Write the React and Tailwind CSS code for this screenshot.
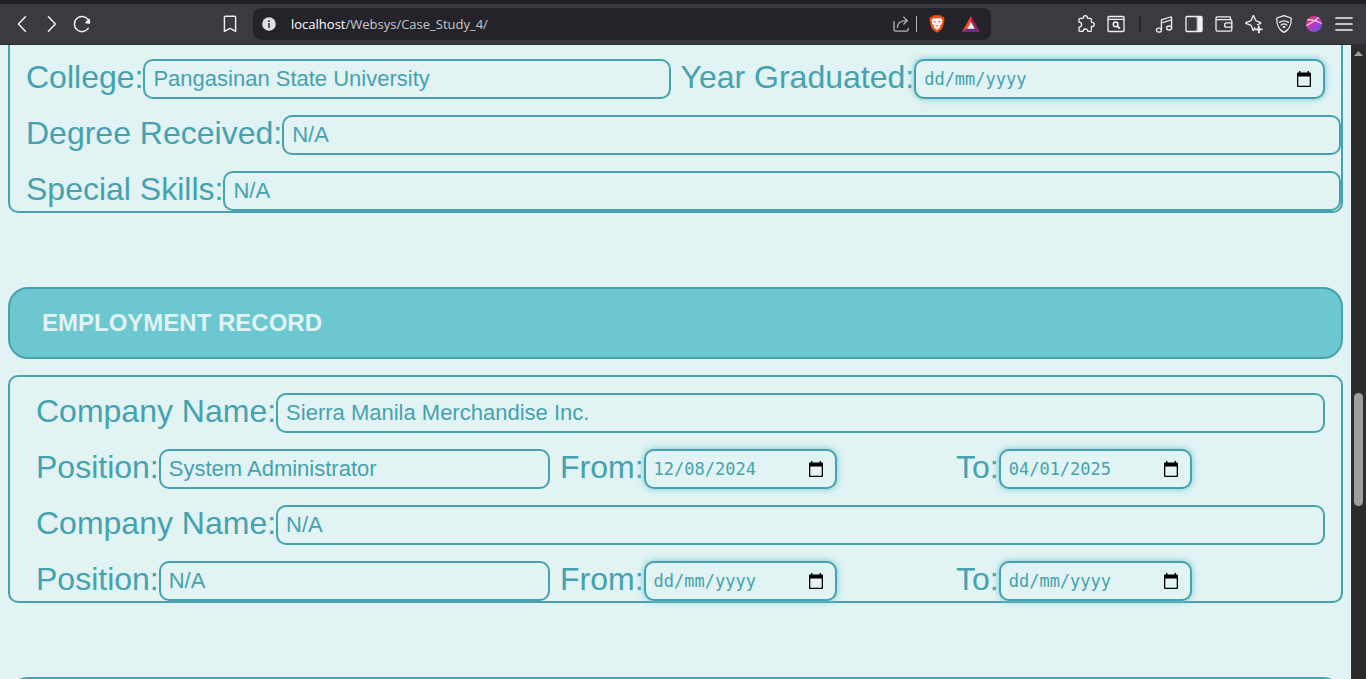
import React, { useId } from "react";

function Icon({ children, className = "", label }) {
  return (
    <button
      type="button"
      aria-label={label}
      className={"flex h-8 w-[30px] shrink-0 items-center justify-center " + className}
    >
      <svg
        width="20"
        height="20"
        viewBox="0 0 20 20"
        fill="none"
        stroke="currentColor"
        strokeWidth="1.3"
        strokeLinecap="round"
        strokeLinejoin="round"
        aria-hidden="true"
      >
        {children}
      </svg>
    </button>
  );
}

function Toolbar() {
  return (
    <header className="flex h-[45px] shrink-0 items-center border-t-4 border-b border-t-[#1f1e24] border-b-[#2e2d32] bg-[#3b3a3f] text-[#f1f1f3]">
      <nav className="flex w-[253px] shrink-0 items-center pr-2 pl-[7px]">
        <Icon label="Back">
          <path d="M13.4 2.8 L6.4 10 L13.4 17.2" strokeWidth="1.5" />
        </Icon>
        <Icon label="Forward">
          <path d="M6.4 2.8 L13.4 10 L6.4 17.2" strokeWidth="1.5" />
        </Icon>
        <Icon label="Reload">
          <path d="M16.2 14.4 A7.6 7.6 0 1 1 16 5.4" strokeWidth="1.5" />
          <path d="M17.2 5.6 L17.4 9 L14 8.6 Z" fill="currentColor" strokeWidth="1.6" />
        </Icon>
        <Icon label="Bookmark" className="ml-auto">
          <path d="M5.4 2.2 H14.6 Q15.6 2.2 15.6 3.2 V17.4 L10 14.4 L4.4 17.4 V3.2 Q4.4 2.2 5.4 2.2 Z" strokeWidth="1.4" />
        </Icon>
      </nav>

      <div className="flex h-8 min-w-0 flex-1 items-center rounded-lg bg-[#242329] pr-1.5 pl-[9px]">
        <svg width="14" height="14" viewBox="0 0 14 14" className="shrink-0" aria-hidden="true">
          <circle cx="7" cy="7" r="6.8" fill="#dfdfe5" />
          <rect x="6" y="3.2" width="2" height="1.8" fill="#55545a" />
          <rect x="6" y="6" width="2" height="4.8" fill="#55545a" />
        </svg>
        <a
          href="http://localhost/Websys/Case_Study_4/"
          className="ml-[15px] min-w-0 flex-1 truncate font-['Open_Sans',sans-serif] text-[13px] leading-5 text-[#c6c6cb]"
        >
          <span className="text-white">localhost</span>/Websys/Case_Study_4/
        </a>
        <Icon label="Share" className="text-[#b4b4ba]">
          <path d="M3 7.6 V15.6 Q3 17.2 4.6 17.2 H15.6 Q17.2 17.2 17.2 15.6 V14.4" />
          <path d="M6.4 13.4 C6.4 8.6 9.4 6.6 16 6.6 M12.8 3.2 L16.4 6.6 L12.8 10" />
        </Icon>
        <span className="h-4 w-px bg-[#b4b4ba]" />
        <button type="button" aria-label="Shields" className="flex h-8 w-10 items-center justify-center">
          <svg width="16" height="18" viewBox="0 0 16 18" aria-hidden="true">
            <path
              d="M4.3 0.3 H11.7 L13.2 1.9 L14.6 1.8 L15.6 4.2 L15.2 6 C14.4 10 13.6 13 12.6 14.2 L8 17.8 L3.4 14.2 C2.4 13 1.6 10 0.8 6 L0.4 4.2 L1.4 1.8 L2.8 1.9 Z"
              fill="#fb4f12"
            />
            <path
              d="M4.4 3 L6.4 3.4 L8 3.1 L9.6 3.4 L11.6 3 L13.5 5.5 L12.8 7.3 L13 8.6 L10.8 10.9 L11.2 12.3 L8 14.9 L4.8 12.3 L5.2 10.9 L3 8.6 L3.2 7.3 L2.5 5.5 Z"
              fill="#fff"
            />
            <path
              d="M4.4 6 L7 6.6 L6.7 7.6 L5 7.2 Z M11.6 6 L9 6.6 L9.3 7.6 L11 7.2 Z M6.3 9.8 L8 10.8 L9.7 9.8 L9.6 10.8 L8 11.6 L6.4 10.8 Z"
              fill="#fb4f12"
            />
          </svg>
        </button>
        <button type="button" aria-label="Rewards" className="flex h-8 w-[28px] items-center justify-center">
          <svg width="18" height="16" viewBox="0 0 18 16" aria-hidden="true">
            <path d="M9 0 L0 16 L5.4 12.8 L9 6 Z" fill="#ff4a2a" />
            <path d="M9 0 L18 16 L12.6 12.8 L9 6 Z" fill="#9e1f63" />
            <path d="M0 16 H18 L12.6 12.8 H5.4 Z" fill="#662d91" />
            <path d="M9 6 L12.8 12.8 H5.2 Z" fill="#fff" />
          </svg>
        </button>
      </div>

      <div className="flex w-[375px] shrink-0 items-center justify-end pr-[7px]">
        <Icon label="Extensions">
          <path d="M4.4 4.4 H7 Q7.4 4.4 7.4 3.8 C7.4 2.4 8.2 1.6 9.4 1.6 C10.6 1.6 11.4 2.4 11.4 3.8 Q11.4 4.4 11.8 4.4 H14.4 Q15.4 4.4 15.4 5.4 V8 Q15.4 8.4 16 8.4 C17.4 8.4 18.2 9.2 18.2 10.4 C18.2 11.6 17.4 12.4 16 12.4 Q15.4 12.4 15.4 12.8 V16.4 Q15.4 17.4 14.4 17.4 H11.8 C11.8 15.8 10.8 15 9.4 15 C8 15 7 15.8 7 17.4 H4 Q3 17.4 3 16.4 V13.2 C4.6 13.2 5.6 12 5.6 10.6 C5.6 9.2 4.6 8.2 3 8.2 V5.4 Q3 4.4 4.4 4.4 Z" />
        </Icon>
        <Icon label="Search tabs">
          <rect x="2" y="2.5" width="16" height="15" rx="1" />
          <path d="M2 5.4 H18" />
          <circle cx="9.6" cy="10.4" r="2.3" strokeWidth="1.5" />
          <path d="M11.3 12.1 L13.4 14.2" strokeWidth="1.7" />
        </Icon>
        <span className="flex w-[18px] shrink-0 justify-center">
          <span className="h-4 w-0.5 bg-[#242329]" />
        </span>
        <Icon label="Music">
          <path d="M7.4 16 V6.4 Q7.4 5.8 8 5.6 L16.6 3 Q17.6 2.8 17.6 3.6 V13.8 M7.4 9 L17.6 5.8" />
          <ellipse cx="4.9" cy="16.2" rx="2.5" ry="2" />
          <ellipse cx="15.1" cy="14" rx="2.5" ry="2" />
        </Icon>
        <Icon label="Sidebar">
          <rect x="2" y="2.5" width="16" height="15" rx="1" />
          <rect x="13.4" y="3" width="4.4" height="14" fill="currentColor" strokeWidth="0.6" />
        </Icon>
        <Icon label="Wallet">
          <path d="M16.4 5.6 V3.6 Q16.4 2.8 15.6 2.8 H3.4 Q2 2.8 2 4.2 V15.8 Q2 17.2 3.4 17.2 H16.4 Q17.8 17.2 17.8 15.8 V7 Q17.8 5.6 16.4 5.6 H3" />
          <path d="M17.8 8.8 H12.6 Q10.6 8.8 10.6 11 Q10.6 13.2 12.6 13.2 H17.8" />
        </Icon>
        <Icon label="Leo AI">
          <path d="M10.6 13.6 L10 15.8 Q9.4 17.4 8.8 15.8 L7.6 12.4 Q7.2 11.2 6 10.8 L2.4 9.7 Q1 9 2.4 8.4 L6 7.2 Q7.2 6.8 7.6 5.6 L8.8 2.4 Q9.4 1 10 2.4 L11.2 5.6 Q11.6 6.8 12.8 7.2 L16.2 8.4 Q17.4 9 16.2 9.7 L13.6 10.6" />
          <path d="M14.8 12.4 V18.4 M11.8 15.4 H17.8" strokeWidth="1.9" />
        </Icon>
        <Icon label="VPN">
          <path d="M10 1.6 L17.2 4 C17.4 10.6 16.2 15.2 10 18.4 C3.8 15.2 2.6 10.6 2.8 4 Z" />
          <path d="M5.6 8.4 Q10 5.2 14.4 8.4 M7.2 11 Q10 8.8 12.8 11" />
          <circle cx="10" cy="13" r="1" fill="currentColor" strokeWidth="0.5" />
        </Icon>
        <Icon label="Profile">
          <defs>
            <linearGradient id="avatar" x1="0" y1="0" x2="1" y2="1">
              <stop offset="0.1" stopColor="#e8395d" />
              <stop offset="0.5" stopColor="#b53cc4" />
              <stop offset="1" stopColor="#4a5cf0" />
            </linearGradient>
          </defs>
          <circle cx="10" cy="10" r="8" fill="url(#avatar)" stroke="none" />
          <path d="M2.6 11.4 C7 9.4 11 7 14.4 3.6 M3.8 5.6 C8.4 6 13.4 7 17.2 9.4" strokeWidth="1.1" stroke="#f6d9ee" />
        </Icon>
        <Icon label="Menu">
          <path d="M2 4 H18 M2 10 H18 M2 16 H18" strokeWidth="1.7" />
        </Icon>
      </div>
    </header>
  );
}

function Field({ label, value }) {
  const id = useId();
  return (
    <div className="flex min-w-0 flex-1 items-start">
      <label htmlFor={id} className="shrink-0 text-[32px] leading-9 whitespace-nowrap">
        {label}
      </label>
      <input
        id={id}
        type="text"
        defaultValue={value}
        className="h-10 min-w-0 flex-1 rounded-[10px] border-2 border-[#46a2ae] bg-transparent px-2 text-[22px] outline-none"
      />
    </div>
  );
}

function DateField({ label, value, wide }) {
  const id = useId();
  return (
    <div className="flex min-w-0 flex-1 items-start">
      <label htmlFor={id} className="shrink-0 text-[32px] leading-9 whitespace-nowrap">
        {label}
      </label>
      <div
        className={
          "flex h-10 min-w-0 items-center rounded-[10px] border-2 border-[#46a2ae] bg-[#e1f3f3] pr-3 pl-2 shadow-[0_0_6px_#6cc7d0] " +
          (wide ? "flex-1" : "w-[193px]")
        }
      >
        <input
          id={id}
          type="text"
          placeholder="dd/mm/yyyy"
          defaultValue={value}
          className="h-full min-w-0 flex-1 bg-transparent font-['DejaVu_Sans_Mono',monospace] text-[17px] outline-none placeholder:text-[#46a2ae]"
        />
        <button type="button" aria-label="Show date picker" className="shrink-0">
          <svg width="14" height="16" viewBox="0 0 14 16" aria-hidden="true">
            <path
              d="M2 0 H3.4 V1.6 H10.6 V0 H12 V1.6 H13 Q14 1.6 14 2.6 V15 Q14 16 13 16 H1 Q0 16 0 15 V2.6 Q0 1.6 1 1.6 H2 Z M1.3 5.6 V14.7 H12.7 V5.6 Z"
              fill="#000"
              fillRule="evenodd"
            />
          </svg>
        </button>
      </div>
    </div>
  );
}

function Job({ company, position, from, to }) {
  return (
    <>
      <div className="flex">
        <Field label="Company Name:" value={company} />
      </div>
      <div className="grid grid-cols-[514fr_386fr_369fr] gap-2.5">
        <Field label="Position:" value={position} />
        <DateField label="From:" value={from} />
        <DateField label="To:" value={to} />
      </div>
    </>
  );
}

function Scrollbar() {
  return (
    <div className="flex w-[15px] shrink-0 flex-col items-center bg-[#2c2c2c] pt-1.5" aria-hidden="true">
      <svg width="9" height="5" viewBox="0 0 9 5">
        <path d="M4.5 0 L9 5 H0 Z" fill="#a0a0a0" />
      </svg>
      <div className="flex-[337]" />
      <div className="w-[9px] flex-[113] rounded-full bg-[#9f9f9f]" />
      <div className="flex-[173]" />
    </div>
  );
}

export default function App() {
  return (
    <div className="flex h-screen flex-col overflow-hidden font-['Liberation_Sans',Arial,sans-serif]">
      <Toolbar />
      <div className="flex min-h-0 flex-1">
        <main className="min-w-0 flex-1 overflow-hidden bg-[#e1f3f3] px-2 text-[#46a2ae]">
          <section className="flex flex-col gap-4 rounded-b-[10px] border-2 border-t-0 border-[#46a2ae] pt-3.5 pl-4">
            <div className="mr-4 flex gap-2.5">
              <Field label="College:" value="Pangasinan State University" />
              <DateField label="Year Graduated:" wide />
            </div>
            <div className="flex">
              <Field label="Degree Received:" value="N/A" />
            </div>
            <div className="flex">
              <Field label="Special Skills:" value="N/A" />
            </div>
          </section>

          <h2 className="mt-[74px] flex h-[72px] items-center rounded-[20px] border-2 border-[#46a2ae] bg-[#6cc7d0] px-8 text-2xl font-bold text-[#e1f3f3]">
            EMPLOYMENT RECORD
          </h2>
          <section className="mt-4 flex flex-col gap-4 rounded-[10px] border-2 border-[#46a2ae] pt-4 pr-4 pl-[26px]">
            <Job
              company="Sierra Manila Merchandise Inc."
              position="System Administrator"
              from="12/08/2024"
              to="04/01/2025"
            />
            <Job company="N/A" position="N/A" />
          </section>

          <div className="mt-[74px] h-[72px] rounded-[20px] border-2 border-[#46a2ae] bg-[#6cc7d0]" />
        </main>
        <Scrollbar />
      </div>
    </div>
  );
}
